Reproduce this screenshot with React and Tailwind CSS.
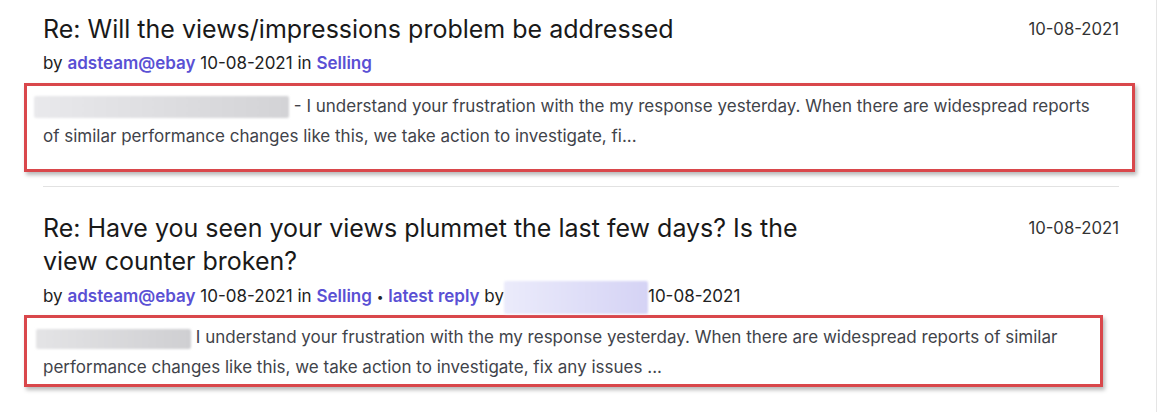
import React from 'react';

function Blur({ className }) {
    return <span className={"inline-block align-middle rounded-[2px] blur-[1px] " + className}></span>
}

function Row({ title, children, snippet, boxWidth, boxClass, titleTop, metaTop }) {
    return (
        <div className={titleTop}>
            <div className="flex justify-between items-start">
                <h2 className="text-[25px] leading-[33px] text-[#191919] max-w-[800px]">{title}</h2>
                <span className="text-[16.7px] leading-[32px] text-[#333]">10-08-2021</span>
            </div>
            <div className={"text-[17px] leading-[24px] text-[#222] " + metaTop}>{children}</div>
            <div className={"ml-[-19px] border-[3px] border-[#d9474b] shadow-[2px_3px_4px_rgba(0,0,0,0.28)] pl-[16px] pr-[26px] text-[17px] leading-[30px] text-[#41434a] " + boxClass} style={{ width: boxWidth }}>
                {snippet}
            </div>
        </div>
    )
}

export default function App() {
    return (
        <div className="w-[1168px] h-[412px] bg-white font-['Inter',sans-serif] overflow-hidden">
            <div className="w-[1157px] h-full border-r border-[#e5e5e5] pl-[43px] pr-[37px]">
                <Row
                    titleTop="pt-[13px]"
                    metaTop="mt-[5px]"
                    title="Re: Will the views/impressions problem be addressed"
                    boxWidth="1111px"
                    boxClass="mt-[8px] pt-[5px] pb-[18px]"
                    snippet={<>
                        <Blur className="w-[255px] h-[22px] ml-[-9px] bg-gradient-to-r from-[#e9e9ec] to-[#d3d3d6]" /> - I understand your frustration with the my response yesterday. When there are widespread reports of similar performance changes like this, we take action to investigate, fi...
                    </>}
                >
                    by <a className="font-semibold text-[#5a50d4]">adsteam@ebay</a> 10-08-2021 in <a className="font-semibold text-[#5a50d4]">Selling</a>
                </Row>

                <div className="mt-[14px] h-px bg-[#e2e2e2]"></div>

                <Row
                    titleTop="pt-[25px]"
                    metaTop="mt-[6px]"
                    title="Re: Have you seen your views plummet the last few days? Is the view counter broken?"
                    boxWidth="1079px"
                    boxClass="mt-[6px] pt-[4px] pb-[2px]"
                    snippet={<>
                        <Blur className="w-[155px] h-[20px] ml-[-7px] bg-gradient-to-r from-[#e4e4e6] to-[#cfcfd2]" /> I understand your frustration with the my response yesterday. When there are widespread reports of similar performance changes like this, we take action to investigate, fix any issues ...
                    </>}
                >
                    by <a className="font-semibold text-[#5a50d4]">adsteam@ebay</a> 10-08-2021 in <a className="font-semibold text-[#5a50d4]">Selling</a> <span className="text-[12px] align-middle">•</span> <a className="font-semibold text-[#5a50d4]">latest reply</a> by<Blur className="w-[144px] h-[33px] -my-[6px] bg-gradient-to-r from-[#ebebfb] to-[#d5d3f5]" />10-08-2021
                </Row>
            </div>
        </div>
    )
}
